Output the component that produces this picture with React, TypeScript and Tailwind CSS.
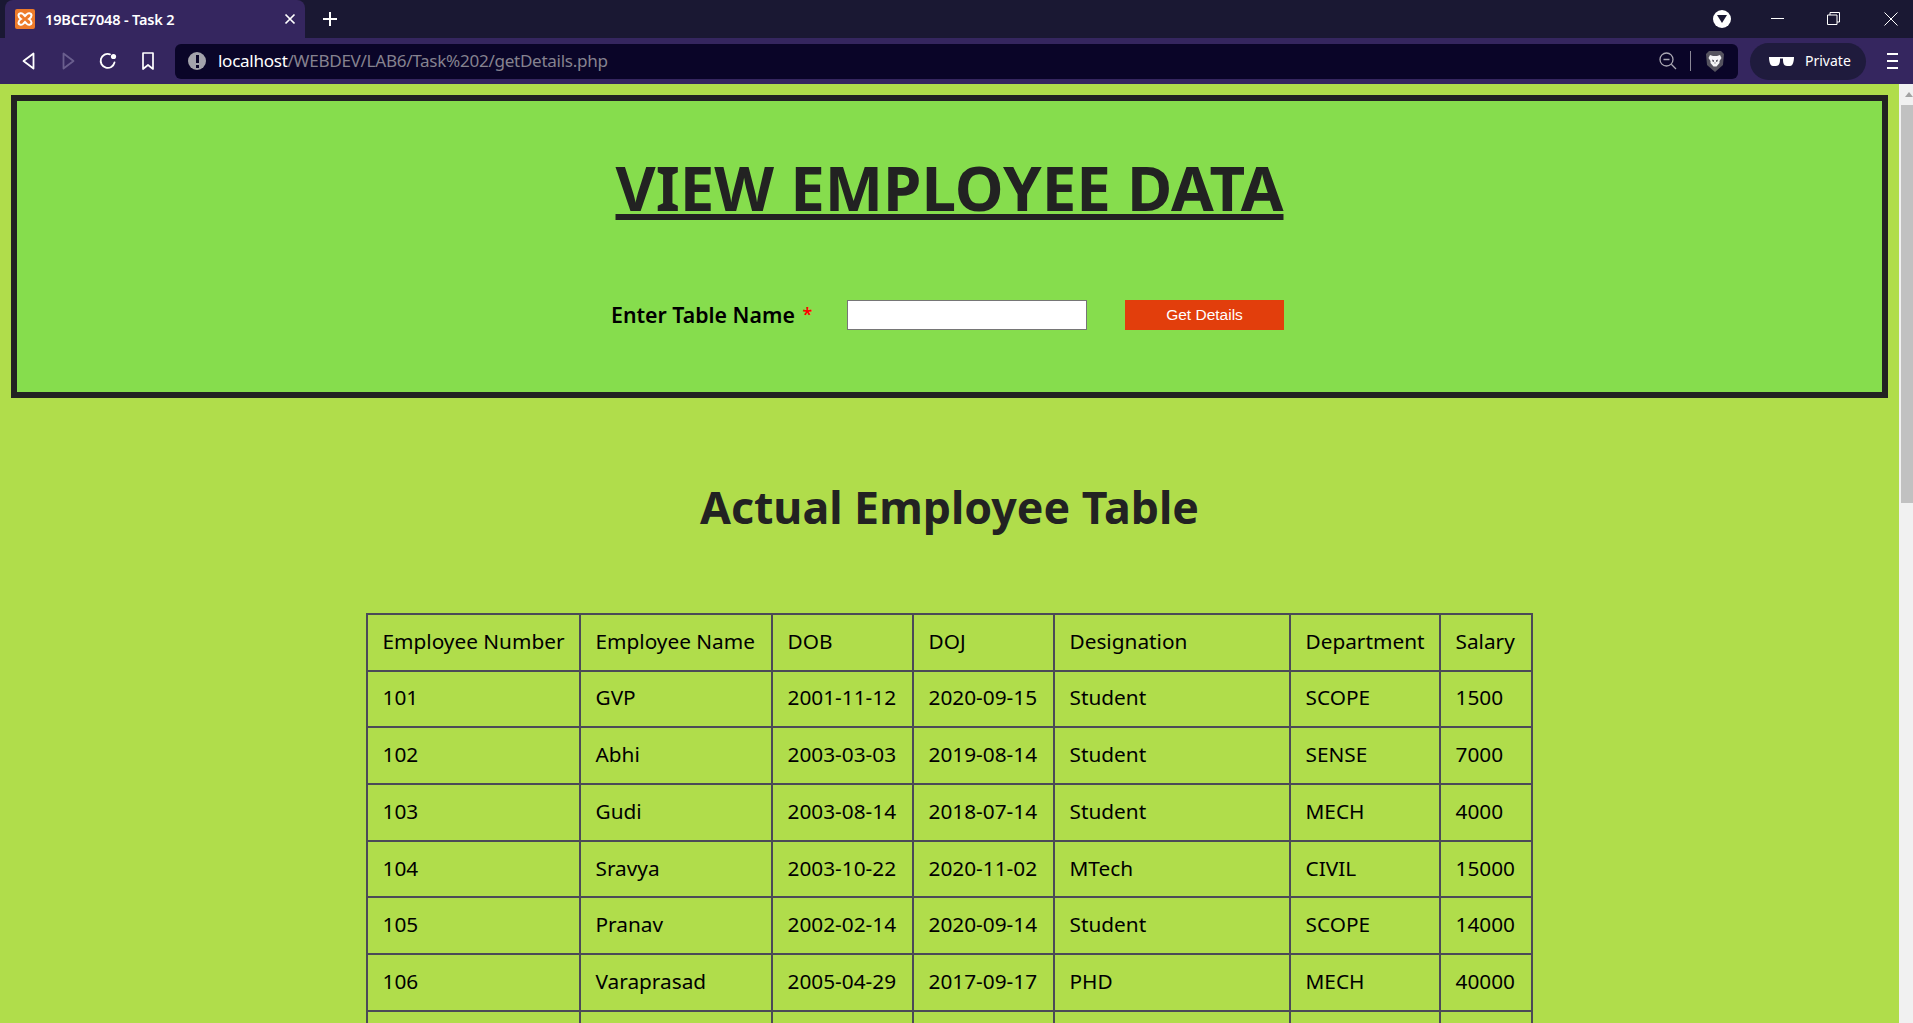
const header = ["Employee Number", "Employee Name", "DOB", "DOJ", "Designation", "Department", "Salary"];
const rows = [
  ["101", "GVP", "2001-11-12", "2020-09-15", "Student", "SCOPE", "1500"],
  ["102", "Abhi", "2003-03-03", "2019-08-14", "Student", "SENSE", "7000"],
  ["103", "Gudi", "2003-08-14", "2018-07-14", "Student", "MECH", "4000"],
  ["104", "Sravya", "2003-10-22", "2020-11-02", "MTech", "CIVIL", "15000"],
  ["105", "Pranav", "2002-02-14", "2020-09-14", "Student", "SCOPE", "14000"],
  ["106", "Varaprasad", "2005-04-29", "2017-09-17", "PHD", "MECH", "40000"],
  ["\u00a0", "", "", "", "", "", ""],
];

function Chrome() {
  return (
    <div className="font-['Noto_Sans',sans-serif]">
      <div className="flex h-[38px] items-end bg-[#1a1833] pl-[5px] text-white">
        <div className="flex h-[38px] w-[300px] items-center rounded-t-lg bg-[#35265f] pl-[10px] pr-[9px]">
          <svg width="20" height="20" viewBox="0 0 20 20" className="shrink-0">
            <rect width="20" height="20" rx="2" fill="#ee7b2a" />
            <path d="M3.5 6.5C3.5 4 7 3.5 8.5 5.5L10 7l1.500-1.500C13 3.500 16.500 4 16.500 6.500c0 1.500-1 2.500-2.500 3.500 1.500 1 2.500 2 2.500 3.500 0 2.500-3.500 3-5 1L10 13l-1.500 1.500c-1.500 2-5 1.500-5-1 0-1.500 1-2.500 2.500-3.500-1.500-1-2.500-2-2.500-3.500Z" fill="none" stroke="#fff" strokeWidth="2" />
          </svg>
          <span className="ml-[10px] flex-1 text-[14.500px] font-semibold leading-none tracking-[-0.15px]">19BCE7048 - Task 2</span>
          <svg width="12" height="12" viewBox="0 0 12 12" stroke="#fff" strokeWidth="1.700">
            <path d="M1.500 1.500l9 9M10.500 1.500l-9 9" />
          </svg>
        </div>
        <svg width="16" height="16" viewBox="0 0 16 16" stroke="#fff" strokeWidth="2" className="mb-[11px] ml-[17px]">
          <path d="M8 1v14M1 8h14" />
        </svg>
        <div className="flex-1" />
        <div className="mb-[10px] flex h-[18px] w-[18px] items-center justify-center rounded-full bg-white">
          <svg width="10" height="8" viewBox="0 0 10 8"><path d="M0 0h10L5 8Z" fill="#1a1833" /></svg>
        </div>
        <div className="mb-[19px] ml-[40px] h-px w-[13px] bg-white" />
        <svg width="13" height="13" viewBox="0 0 13 13" fill="none" stroke="#fff" className="mb-[13px] ml-[43px]">
          <path d="M3 3V.5h9.500V10H10M.500 3h9.500v9.500H.500Z" />
        </svg>
        <svg width="14" height="14" viewBox="0 0 14 14" stroke="#fff" className="mb-[12px] ml-[44px] mr-[15px]">
          <path d="M.500.500l13 13M13.500.500l-13 13" />
        </svg>
      </div>
      <div className="flex h-[46px] items-center bg-[#35265f] pl-[22px]">
        <svg width="13" height="18" viewBox="0 0 13 18" fill="none" stroke="#fff" strokeWidth="1.800" strokeLinejoin="round">
          <path d="M11.500 1.500v15L1.500 9Z" />
        </svg>
        <svg width="13" height="18" viewBox="0 0 13 18" fill="none" stroke="#6a5e8e" strokeWidth="1.800" strokeLinejoin="round" className="ml-[27px]">
          <path d="M1.500 1.500v15l10-7.500Z" />
        </svg>
        <svg width="18" height="18" viewBox="0 0 18 18" fill="none" className="ml-[24px]">
          <path d="M15.500 10.500A7 7 0 1 1 11 2.300" stroke="#fff" strokeWidth="1.800" strokeLinecap="round" />
          <circle cx="14.500" cy="4.500" r="2.600" fill="#fff" />
        </svg>
        <svg width="12" height="18" viewBox="0 0 12 18" fill="none" stroke="#fff" strokeWidth="1.700" strokeLinejoin="round" className="ml-[25px]">
          <path d="M1 1h10v16l-5-4-5 4Z" />
        </svg>
        <div className="ml-[21px] flex h-[35px] w-[1563px] items-center rounded-md bg-[#0a0528] pl-[13px]">
          <div className="flex h-[18px] w-[18px] items-center justify-center rounded-full bg-[#a3a3ab]">
            <div className="flex flex-col items-center gap-[2px]">
              <div className="h-[8px] w-[3px] bg-[#0a0528]" />
              <div className="h-[3px] w-[3px] bg-[#0a0528]" />
            </div>
          </div>
          <div className="ml-[12px] text-[17.100px] leading-none tracking-[-0.3px] text-[#85828f]">
            <span className="text-white">localhost</span>/WEBDEV/LAB6/Task%202/getDetails.php
          </div>
          <div className="flex-1" />
          <svg width="18" height="18" viewBox="0 0 18 18" fill="none" stroke="#a9a7b2" strokeWidth="1.300" className="mr-[1px]">
            <circle cx="7.500" cy="7.500" r="6.500" />
            <path d="M4.500 7.500h6M12.300 12.300 17 17" />
          </svg>
          <div className="ml-[12px] h-[20px] w-px bg-[#8b8896]" />
          <svg width="20" height="23" viewBox="0 0 20 23" className="ml-[14px] mr-[13px]">
            <path d="M4 1h12l3 3-1 11-8 7-8-7L1 4Z" fill="#55535f" />
            <path d="M5 5l3 1h4l3-1 1.500 3-2 3v2l-3 3.500h-3L5.500 13v-2l-2-3Z" fill="#f4f4f6" />
            <path d="M7 9.500l2 .8v2.500h2v-2.500l2-.8-.5 2-1.500.5L10 14l-1-2-1.500-.5Z" fill="#55535f" />
          </svg>
        </div>
        <div className="ml-[12px] flex h-[37px] w-[116px] items-center rounded-full bg-[#1f1b3d] pl-[19px] text-white">
          <svg width="25" height="9" viewBox="0 0 25 9" fill="#fff">
            <path d="M0 0h11v3c0 3-1 6-4 6H4C1 9 0 4 0 0ZM14 0h11c0 4-1 9-4 9h-3c-3 0-4-3-4-6ZM11 0h3v1.500h-3Z" />
          </svg>
          <span className="mb-[1px] ml-[11px] text-[14px] leading-none">Private</span>
        </div>
        <div className="ml-[21px] flex w-[11px] flex-col gap-[5.500px]">
          <div className="h-[1.500px] bg-white" />
          <div className="h-[1.500px] bg-white" />
          <div className="h-[1.500px] bg-white" />
        </div>
      </div>
    </div>
  );
}

export default function App() {
  return (
    <div className="flex h-[1023px] w-[1913px] flex-col overflow-hidden">
      <Chrome />
      <div className="flex h-[939px]">
        <main className="h-full flex-1 overflow-hidden bg-[#b0dd4b] font-['Noto_Sans',sans-serif] text-[#222222]">
          <section className="mx-[11px] mt-[11px] h-[303px] border-[6px] border-[#222222] bg-[#86dd4d] pt-[45px]">
            <h1 className="text-center text-[61.800px] font-bold leading-[82px]">
              <span className="underline decoration-[6px] underline-offset-[3px] [text-decoration-skip-ink:none]">VIEW EMPLOYEE DATA</span>
            </h1>
            <form className="mt-[72px] flex h-[30px] items-center">
              <label className="ml-[594px] w-[236px] whitespace-nowrap text-[21.300px] font-semibold text-black">
                Enter Table Name <span className="relative -top-[2px] ml-[2px] text-[18px] text-[#ff0000]">*</span>
              </label>
              <input className="h-[30px] w-[240px] border border-[#767676] bg-white" />
              <button type="button" className="ml-[38px] h-[30px] w-[159px] bg-[#e23e0c] font-['Liberation_Sans',sans-serif] text-[15.500px] text-white">
                Get Details
              </button>
            </form>
          </section>
          <h2 className="mt-[78px] text-center text-[44.700px] font-bold leading-[62px]">Actual Employee Table</h2>
          <table className="mx-auto mt-[75px] w-[1165px] table-fixed border-collapse text-[20.800px] text-black">
            <colgroup>
              <col className="w-[213px]" />
              <col className="w-[192px]" />
              <col className="w-[141px]" />
              <col className="w-[141px]" />
              <col className="w-[236px]" />
              <col className="w-[150px]" />
              <col className="w-[92px]" />
            </colgroup>
            <tbody>
              <tr className="h-[56.700px]">
                {header.map((h) => (
                  <td key={h} className="border-2 border-[#4b4a57] pb-[2px] pl-[14.500px] whitespace-nowrap">{h}</td>
                ))}
              </tr>
              {rows.map((r, i) => (
                <tr key={i} className="h-[56.700px]">
                  {r.map((c, j) => (
                    <td key={j} className="border-2 border-[#4b4a57] pb-[2px] pl-[14.500px] whitespace-nowrap">{c}</td>
                  ))}
                </tr>
              ))}
            </tbody>
          </table>
        </main>
        <aside className="flex w-[14px] flex-col items-end bg-[#f1f1f1]">
          <div className="flex h-[21px] w-[12px] items-center justify-center pl-[4px]">
            <svg width="8" height="5" viewBox="0 0 8 5"><path d="M4 0l4 5H0Z" fill="#a3a3a3" /></svg>
          </div>
          <div className="h-[398px] w-[12px] bg-[#c1c1c1]" />
        </aside>
      </div>
    </div>
  );
}
